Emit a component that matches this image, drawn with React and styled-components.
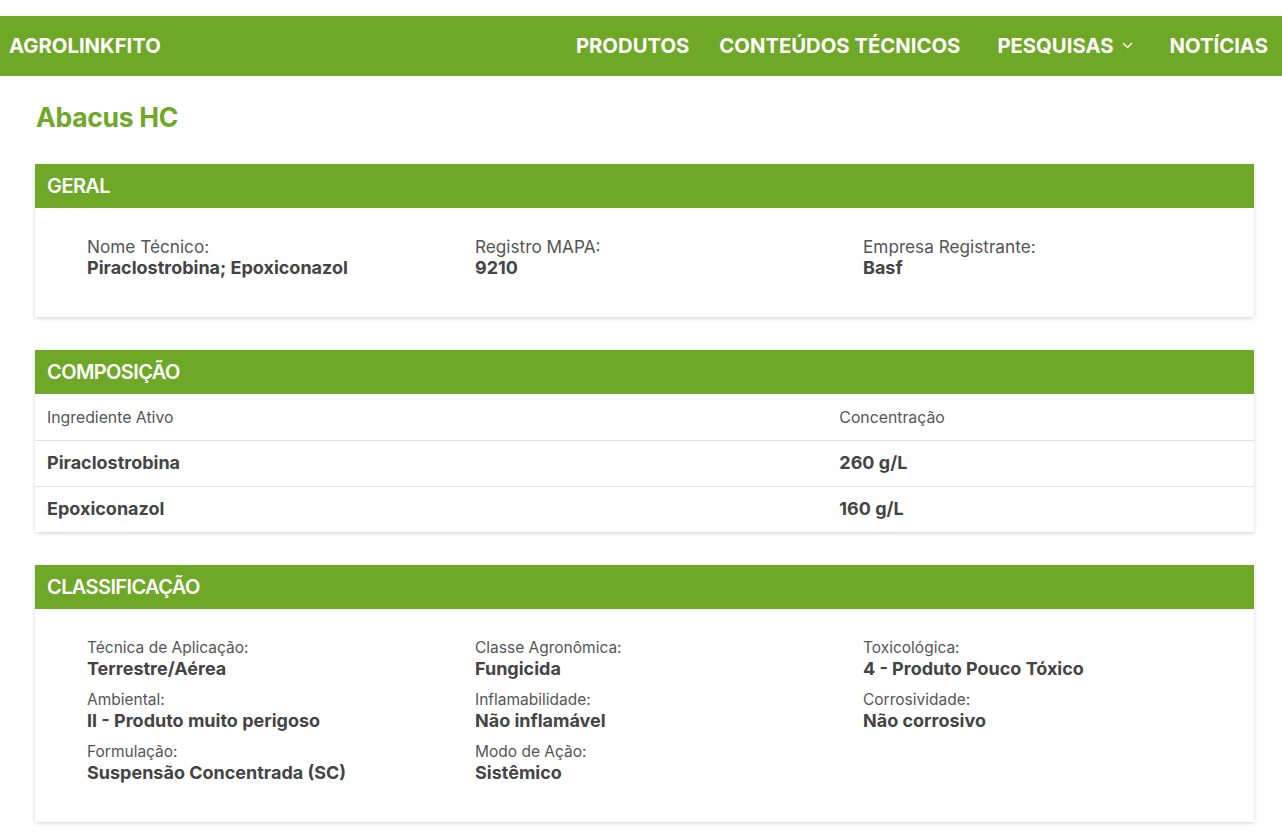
import styled, { createGlobalStyle } from 'styled-components';

const GREEN = '#6ea826';

const GlobalStyle = createGlobalStyle`
  body {
    margin: 0;
    padding-top: 16px;
    background: #fff;
    font-family: Inter, "Noto Sans", sans-serif;
    color: #444;
  }
  * { box-sizing: border-box; }
`;

const NavBar = styled.nav`
  height: 60px;
  background: ${GREEN};
  display: flex;
  align-items: center;
  justify-content: space-between;
  padding: 0 14px 2px 9px;
`;

const Brand = styled.div`
  color: #fff;
  font-weight: 700;
  font-size: 20.3px;
`;

const NavLinks = styled.ul`
  display: flex;
  align-items: center;
  gap: 30px;
  list-style: none;
  margin: 0;
  padding: 0;
`;

const NavLink = styled.li`
  color: #fff;
  font-weight: 700;
  font-size: 20.3px;
  display: flex;
  align-items: center;
  gap: 8px;
  margin-left: ${({ $extra }) => ($extra ? '7px' : '0')};
`;

const Main = styled.main`
  padding: 25px 28px 20px 35px;
`;

const PageTitle = styled.h1`
  margin: 0 0 31px 1px;
  color: ${GREEN};
  font-size: 26.5px;
  line-height: 32px;
  font-weight: 700;
  letter-spacing: -0.3px;
`;

const Card = styled.section`
  background: #fff;
  box-shadow: 0 1px 4px rgba(0, 0, 0, 0.18);
  margin-bottom: 33px;
`;

const CardHeader = styled.h2`
  margin: 0;
  height: 44px;
  display: flex;
  align-items: center;
  padding: 0 12px;
  background: ${GREEN};
  color: #fff;
  font-size: 20px;
  font-weight: 600;
  letter-spacing: -0.6px;
`;

const FieldGrid = styled.div`
  display: grid;
  grid-template-columns: repeat(3, 388px);
  row-gap: 10px;
  padding: ${({ $pad }) => $pad};
`;

const Field = styled.div`
  display: flex;
  flex-direction: column;
`;

const Label = styled.span`
  font-size: ${({ $size }) => $size || '15.5px'};
  line-height: ${({ $lh }) => $lh || '20px'};
  color: #555;
`;

const Value = styled.span`
  font-size: 18px;
  line-height: 22px;
  font-weight: 700;
  color: #444;
`;

const Table = styled.table`
  width: 100%;
  border-collapse: collapse;
`;

const HeadCell = styled.th`
  text-align: left;
  font-weight: 400;
  font-size: 15.8px;
  color: #555;
  height: 46px;
  padding: 2px 12px 0;
  width: ${({ $w }) => $w || 'auto'};
`;

const Row = styled.tr`
  border-top: 1px solid #e2e2e2;
`;

const Cell = styled.td`
  font-size: 18px;
  font-weight: 700;
  color: #444;
  height: 46px;
  padding: 0 12px 2px;
`;

const Chevron = () => (
  <svg width="11" height="7" viewBox="0 0 11 7" fill="none">
    <path d="M1 1l4.5 4.5L10 1" stroke="#fff" strokeWidth="1.3" />
  </svg>
);

const geral = [
  { label: 'Nome Técnico:', value: 'Piraclostrobina; Epoxiconazol' },
  { label: 'Registro MAPA:', value: '9210' },
  { label: 'Empresa Registrante:', value: 'Basf' },
];

const composicao = [
  { name: 'Piraclostrobina', conc: '260 g/L' },
  { name: 'Epoxiconazol', conc: '160 g/L' },
];

const classificacao = [
  { label: 'Técnica de Aplicação:', value: 'Terrestre/Aérea' },
  { label: 'Classe Agronômica:', value: 'Fungicida' },
  { label: 'Toxicológica:', value: '4 - Produto Pouco Tóxico' },
  { label: 'Ambiental:', value: 'II - Produto muito perigoso' },
  { label: 'Inflamabilidade:', value: 'Não inflamável' },
  { label: 'Corrosividade:', value: 'Não corrosivo' },
  { label: 'Formulação:', value: 'Suspensão Concentrada (SC)' },
  { label: 'Modo de Ação:', value: 'Sistêmico' },
];

export default function App() {
  return (
    <>
      <GlobalStyle />
      <NavBar>
        <Brand>AGROLINKFITO</Brand>
        <NavLinks>
          <NavLink>PRODUTOS</NavLink>
          <NavLink>CONTEÚDOS TÉCNICOS</NavLink>
          <NavLink $extra>
            PESQUISAS <Chevron />
          </NavLink>
          <NavLink $extra>NOTÍCIAS</NavLink>
        </NavLinks>
      </NavBar>
      <Main>
        <PageTitle>Abacus HC</PageTitle>

        <Card>
          <CardHeader>GERAL</CardHeader>
          <FieldGrid $pad="28px 0 38px 52px">
            {geral.map((f) => (
              <Field key={f.label}>
                <Label $size="17.2px" $lh="21px">{f.label}</Label>
                <Value>{f.value}</Value>
              </Field>
            ))}
          </FieldGrid>
        </Card>

        <Card>
          <CardHeader>COMPOSIÇÃO</CardHeader>
          <Table>
            <thead>
              <tr>
                <HeadCell $w="65%">Ingrediente Ativo</HeadCell>
                <HeadCell>Concentração</HeadCell>
              </tr>
            </thead>
            <tbody>
              {composicao.map((c) => (
                <Row key={c.name}>
                  <Cell>{c.name}</Cell>
                  <Cell>{c.conc}</Cell>
                </Row>
              ))}
            </tbody>
          </Table>
        </Card>

        <Card>
          <CardHeader>CLASSIFICAÇÃO</CardHeader>
          <FieldGrid $pad="29px 0 38px 52px">
            {classificacao.map((f) => (
              <Field key={f.label}>
                <Label>{f.label}</Label>
                <Value>{f.value}</Value>
              </Field>
            ))}
          </FieldGrid>
        </Card>
      </Main>
    </>
  );
}
